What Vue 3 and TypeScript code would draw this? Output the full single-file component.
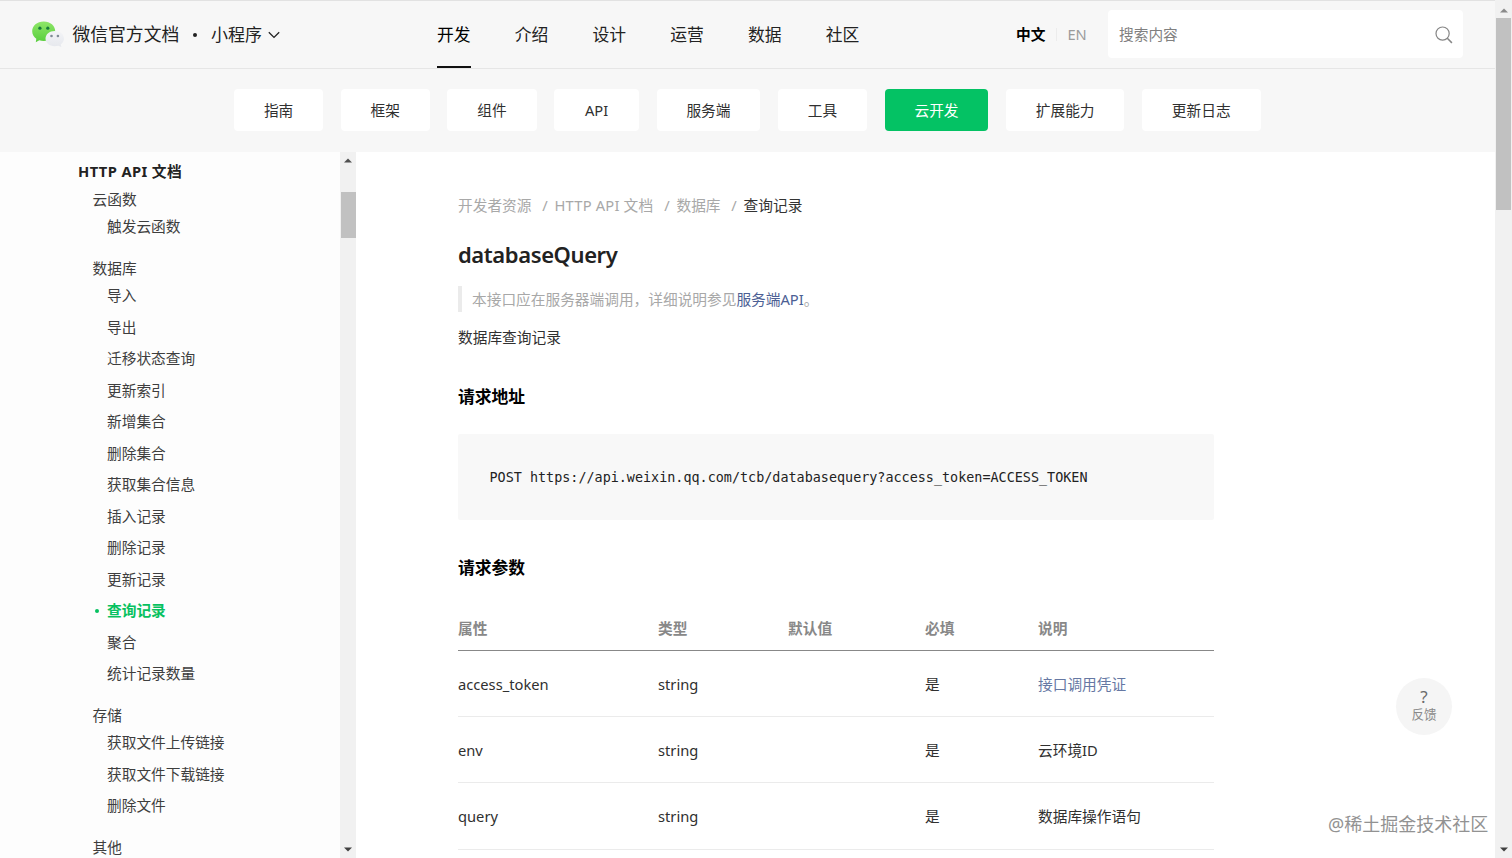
<script setup lang="ts">
interface NavItem {
  label: string
  active?: boolean
}
interface Group {
  title: string
  items: string[]
}
interface Param {
  name: string
  type: string
  fallback: string
  required: string
  note: string
  link?: boolean
}

const navItems: NavItem[] = [
  { label: '开发', active: true },
  { label: '介绍' },
  { label: '设计' },
  { label: '运营' },
  { label: '数据' },
  { label: '社区' },
]

const tabs: NavItem[] = [
  { label: '指南' },
  { label: '框架' },
  { label: '组件' },
  { label: 'API' },
  { label: '服务端' },
  { label: '工具' },
  { label: '云开发', active: true },
  { label: '扩展能力' },
  { label: '更新日志' },
]

const current = '查询记录'

const groups: Group[] = [
  { title: '云函数', items: ['触发云函数'] },
  {
    title: '数据库',
    items: [
      '导入', '导出', '迁移状态查询', '更新索引', '新增集合', '删除集合', '获取集合信息',
      '插入记录', '删除记录', '更新记录', '查询记录', '聚合', '统计记录数量',
    ],
  },
  { title: '存储', items: ['获取文件上传链接', '获取文件下载链接', '删除文件'] },
  { title: '其他', items: [] },
]

const crumbs: string[] = ['开发者资源', 'HTTP API 文档', '数据库']

const columns: string[] = ['属性', '类型', '默认值', '必填', '说明']

const params: Param[] = [
  { name: 'access_token', type: 'string', fallback: '', required: '是', note: '接口调用凭证', link: true },
  { name: 'env', type: 'string', fallback: '', required: '是', note: '云环境ID' },
  { name: 'query', type: 'string', fallback: '', required: '是', note: '数据库操作语句' },
]
</script>

<template>
  <div class="window">
    <div class="page">
      <header class="header">
        <div class="brand">
          <svg class="logo" viewBox="0 0 34 28" width="34" height="28">
            <defs>
              <linearGradient id="green" x1="0" y1="0" x2="0" y2="1">
                <stop offset="0" stop-color="#8ee668" />
                <stop offset="1" stop-color="#58ce3d" />
              </linearGradient>
              <linearGradient id="pale" x1="0" y1="0" x2="0" y2="1">
                <stop offset="0" stop-color="#f3f4f7" />
                <stop offset="1" stop-color="#e6e8ed" />
              </linearGradient>
            </defs>
            <path d="M12.700.5C6 .5 1.200 4.900 1.200 10.200c0 3.200 1.600 5.800 4.100 7.600l-.5 3.400 3.500-2c1.400.5 2.800.7 4.400.7 6.700 0 11.500-4.300 11.500-9.700S19.400.5 12.700.5z" fill="url(#green)" />
            <circle cx="8.900" cy="7.200" r="1.600" fill="#187a3c" />
            <circle cx="16.800" cy="7.200" r="1.600" fill="#187a3c" />
            <path d="M23.800 9.900c-5.400 0-9.300 3.400-9.300 7.700s3.900 7.700 9.300 7.700c1.200 0 2.400-.2 3.500-.5l3.100 1.300-.7-2.700c2-1.400 3.300-3.500 3.300-5.800 0-4.300-3.800-7.700-9.200-7.700z" fill="url(#pale)" />
            <circle cx="20.500" cy="15" r="1.300" fill="#7f8a96" />
            <circle cx="26.900" cy="15" r="1.300" fill="#7f8a96" />
          </svg>
          <span class="site">微信官方文档</span>
          <span class="dot"></span>
          <span class="product">小程序</span>
          <svg class="chevron" viewBox="0 0 12 8" width="12" height="8">
            <path d="M.8 1.200 6 6.400l5.200-5.200" fill="none" stroke="#222" stroke-width="1.300" />
          </svg>
        </div>
        <nav class="nav">
          <a v-for="item in navItems" :key="item.label" :class="{ active: item.active }">{{ item.label }}</a>
        </nav>
        <div class="lang">
          <b>中文</b>
          <i></i>
          <span>EN</span>
        </div>
        <div class="search">
          <span>搜索内容</span>
          <svg viewBox="0 0 18 18" width="18" height="18">
            <circle cx="7.600" cy="7.600" r="6.600" fill="none" stroke="#868686" stroke-width="1.200" />
            <path d="M12.300 12.300l4.600 4.600" stroke="#868686" stroke-width="1.500" />
          </svg>
        </div>
      </header>

      <nav class="tabs">
        <a v-for="tab in tabs" :key="tab.label" :class="{ active: tab.active }">{{ tab.label }}</a>
      </nav>

      <div class="body">
        <aside class="sidebar">
          <div class="tree">
            <h4>HTTP API 文档</h4>
            <section v-for="group in groups" :key="group.title">
              <h5>{{ group.title }}</h5>
              <ul>
                <li v-for="item in group.items" :key="item" :class="{ current: item === current }">{{ item }}</li>
              </ul>
            </section>
          </div>
          <div class="track">
            <svg viewBox="0 0 8 5" width="8" height="5"><path d="M0 4.500h8L4 .5z" fill="#505050" /></svg>
            <div class="thumb"></div>
            <svg viewBox="0 0 8 5" width="8" height="5"><path d="M0 .5h8L4 4.500z" fill="#404040" /></svg>
          </div>
        </aside>

        <main class="content">
          <div class="crumbs">
            <template v-for="crumb in crumbs" :key="crumb">
              <span>{{ crumb }}</span><em>/</em>
            </template>
            <strong>查询记录</strong>
          </div>
          <h1>databaseQuery</h1>
          <blockquote>本接口应在服务器端调用，详细说明参见<a>服务端API</a>。</blockquote>
          <p>数据库查询记录</p>
          <h2>请求地址</h2>
          <pre>POST https://api.weixin.qq.com/tcb/databasequery?access_token=ACCESS_TOKEN</pre>
          <h2 class="second">请求参数</h2>
          <div class="table">
            <div class="row head">
              <span v-for="column in columns" :key="column">{{ column }}</span>
            </div>
            <div v-for="param in params" :key="param.name" class="row">
              <span>{{ param.name }}</span>
              <span>{{ param.type }}</span>
              <span>{{ param.fallback }}</span>
              <span>{{ param.required }}</span>
              <span :class="{ link: param.link }">{{ param.note }}</span>
            </div>
          </div>
        </main>
      </div>
    </div>

    <div class="track outer">
      <svg viewBox="0 0 8 5" width="8" height="5"><path d="M0 4.500h8L4 .5z" fill="#8a8a8a" /></svg>
      <div class="thumb"></div>
      <svg viewBox="0 0 8 5" width="8" height="5"><path d="M0 .5h8L4 4.500z" fill="#404040" /></svg>
    </div>

    <div class="feedback"><b>?</b><span>反馈</span></div>
    <div class="watermark">@稀土掘金技术社区</div>
  </div>
</template>

<style>
body {
  overflow: hidden;
}
</style>

<style scoped>
* {
  box-sizing: border-box;
  margin: 0;
  padding: 0;
}
.window {
  position: relative;
  display: flex;
  width: 1512px;
  height: 858px;
  overflow: hidden;
  background: #fff;
  color: #303030;
  font: 14.7px/23px "Noto Sans", "Noto Sans CJK SC", sans-serif;
  white-space: nowrap;
}
.page {
  display: flex;
  flex-direction: column;
  width: 1495px;
}
.header {
  display: flex;
  flex: none;
  align-items: center;
  height: 69px;
  padding-left: 31px;
  background: #f7f7f7;
  border-top: 1px solid #e2e2e2;
  border-bottom: 1px solid #e6e6e6;
}
.brand {
  display: flex;
  align-items: center;
  width: 406px;
  color: #222;
  font-size: 17px;
}
.logo {
  margin-right: 7.5px;
}
.site {
  width: 107.5px;
  font-size: 17.8px;
}
.dot {
  width: 4px;
  height: 4px;
  margin: 0 14px 0 13px;
  background: #222;
  border-radius: 50%;
}
.chevron {
  margin-left: 6px;
}
.nav {
  display: flex;
  align-self: stretch;
  gap: 44.2px;
  width: 579px;
  font-size: 16.8px;
  line-height: 67px;
  color: #222;
}
.nav a {
  height: 67px;
}
.nav .active {
  color: #000;
  border-bottom: 2px solid #111;
}
.lang {
  display: flex;
  align-items: center;
  width: 92px;
  color: #9b9b9b;
}
.lang b {
  color: #000;
}
.lang i {
  width: 1px;
  height: 13px;
  margin: 0 10px 0 11px;
  background: #ececec;
}
.search {
  display: flex;
  align-items: center;
  justify-content: space-between;
  width: 355px;
  height: 48px;
  margin-top: -1px;
  padding: 1px 10px 0 11px;
  background: #fff;
  border-radius: 4px;
  color: #808080;
}
.tabs {
  display: flex;
  flex: none;
  gap: 17.5px;
  height: 83px;
  padding: 20px 0 0 234px;
  background: #f7f7f7;
}
.tabs a {
  min-width: 85px;
  height: 42px;
  padding: 0 29.9px;
  line-height: 42px;
  text-align: center;
  background: #fff;
  border-radius: 4px;
}
.tabs .active {
  background: #04c264;
  color: #fff;
}
.body {
  display: flex;
  flex: 1;
  min-height: 0;
}
.sidebar {
  display: flex;
  width: 356px;
  overflow: hidden;
  background: #fdfdfd;
}
.tree {
  width: 340px;
  padding: 3.8px 0 0 78px;
  color: #3e3e3e;
}
.tree h4 {
  height: 31.8px;
  line-height: 31.8px;
  font-size: 14.7px;
  letter-spacing: 0.4px;
  color: #222;
}
.tree section {
  padding: 0 0 14.5px 14.5px;
}
.tree h5 {
  height: 23.1px;
  line-height: 23.1px;
  font-size: 14.7px;
  font-weight: 400;
}
.tree ul {
  list-style: none;
  padding-left: 14.5px;
}
.tree li {
  display: flex;
  align-items: center;
  height: 31.5px;
}
.tree .current {
  margin-left: -12.5px;
  color: #07c160;
  font-weight: 700;
}
.tree .current::before {
  content: "";
  width: 4px;
  height: 4px;
  margin-right: 8.5px;
  background: #07c160;
  border-radius: 50%;
}
.track {
  display: flex;
  flex-direction: column;
  align-items: center;
  width: 16px;
  padding: 6px 0;
  background: #f1f1f1;
}
.track .thumb {
  width: 15px;
  height: 46px;
  margin: 29px 0 auto;
  background: #c1c1c1;
}
.outer {
  width: 17px;
  padding-top: 8px;
}
.outer .thumb {
  height: 192px;
  margin-top: 5px;
}
.content {
  width: 858px;
  padding: 41.500px 0 0 102px;
}
.crumbs {
  display: flex;
  color: #a8a8a8;
}
.crumbs em {
  margin: 0 6.8px 0 10.8px;
  font-style: normal;
}
.crumbs span:nth-of-type(2) {
  letter-spacing: 0.2px;
}
.crumbs strong {
  color: #333;
  font-weight: 400;
}
h1 {
  margin-top: 21px;
  font-size: 22px;
  font-weight: 600;
  letter-spacing: -0.4px;
  line-height: 32px;
  color: #222;
}
blockquote {
  height: 26px;
  margin-top: 16.5px;
  padding-left: 10px;
  line-height: 26px;
  color: #a8a8a8;
  border-left: 4px solid #ebebeb;
}
blockquote a {
  color: #4c5f94;
}
p {
  margin-top: 13.5px;
}
h2 {
  margin-top: 35px;
  font-size: 16.8px;
  line-height: 26px;
  color: #000;
}
pre {
  height: 86px;
  margin-top: 24px;
  padding-left: 31.5px;
  font: 13.43px/88px "DejaVu Sans Mono", monospace;
  background: #f8f8f8;
  border-radius: 2px;
  color: #222;
}
.second {
  margin-top: 35px;
}
.table {
  margin-top: 25px;
}
.row {
  display: grid;
  grid-template-columns: 200px 130px 137px 113px 176px;
  align-items: center;
  height: 66.2px;
  padding-top: 1px;
  border-bottom: 1px solid #ebebeb;
}
.head {
  height: 45.500px;
  border-bottom-color: #888;
  color: #888;
  font-weight: 700;
}
.link {
  color: #6678a3;
}
.feedback {
  position: absolute;
  left: 1396px;
  top: 678px;
  display: flex;
  flex-direction: column;
  align-items: center;
  width: 56px;
  height: 57px;
  padding-top: 10px;
  background: #f5f5f5;
  border-radius: 50%;
  color: #8a8a8a;
  font-size: 12.6px;
  line-height: 18px;
}
.feedback b {
  font-size: 17px;
  font-weight: 400;
  color: #6a6a6a;
}
.watermark {
  position: absolute;
  left: 1328px;
  top: 811px;
  font-size: 18px;
  line-height: 27px;
  color: #929292;
  text-shadow: 1px 1px 1px #fff;
}
</style>
